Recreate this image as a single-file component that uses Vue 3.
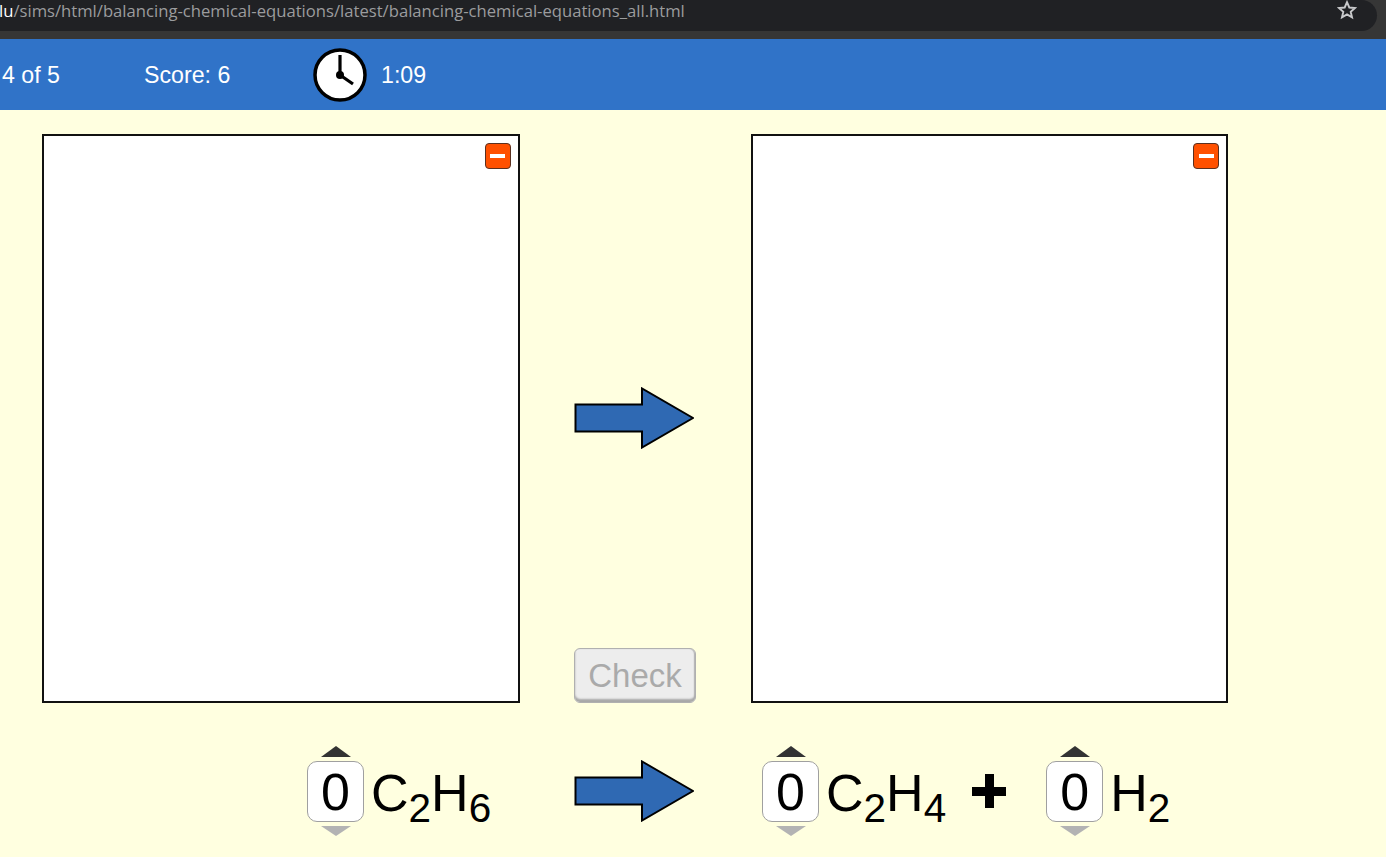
<script setup>
const reactants = [{ id: 1, parts: [["C", "2"], ["H", "6"]] }];
const products = [
  { id: 2, parts: [["C", "2"], ["H", "4"]] },
  { id: 3, parts: [["H", "2"]] },
];
</script>

<template>
  <div class="page">
    <div class="browser">
      <div class="address">
        <span class="url"><span class="host">lu</span>/sims/html/balancing-chemical-equations/latest/balancing-chemical-equations_all.html</span>
        <svg class="star" width="20" height="20" viewBox="0 0 20 20">
          <path d="M10 2.2l2.3 5.3 5.7.5-4.3 3.8 1.3 5.6-5-3-5 3 1.3-5.6L2 8l5.7-.5z" fill="none" stroke="#c8c9cb" stroke-width="1.9" stroke-linejoin="miter" />
        </svg>
      </div>
    </div>

    <header class="status">
      <span class="level">4 of 5</span>
      <span class="score">Score: 6</span>
      <svg class="clock" width="54" height="54" viewBox="0 0 54 54">
        <circle cx="27" cy="27" r="25" fill="#fff" stroke="#000" stroke-width="3.5" />
        <path d="M27 27V7M27 27l13 9" fill="none" stroke="#000" stroke-width="3.2" />
        <circle cx="27" cy="27" r="4" fill="#000" />
      </svg>
      <span class="time">1:09</span>
    </header>

    <main class="game">
      <div class="boxes">
        <section class="box">
          <button class="collapse"><i></i></button>
        </section>
        <div class="middle">
          <svg class="arrow" width="120" height="62" viewBox="0 0 120 62">
            <path d="M1.5 17.5H68V1.5L119 31 68 60.5V44.5H1.5z" fill="#2f69b3" stroke="#000" stroke-width="2" />
          </svg>
          <button class="check" disabled>Check</button>
        </div>
        <section class="box">
          <button class="collapse"><i></i></button>
        </section>
      </div>

      <div class="equation">
        <div class="side left">
          <div v-for="term in reactants" :key="term.id" class="term">
            <div class="spinner">
              <span class="up"></span>
              <span class="value">0</span>
              <span class="down"></span>
            </div>
            <span class="formula"><template v-for="p in term.parts" :key="p[0]">{{ p[0] }}<sub>{{ p[1] }}</sub></template></span>
          </div>
        </div>
        <svg class="arrow eq-arrow" width="120" height="62" viewBox="0 0 120 62">
          <path d="M1.5 17.5H68V1.5L119 31 68 60.5V44.5H1.5z" fill="#2f69b3" stroke="#000" stroke-width="2" />
        </svg>
        <div class="side right">
          <template v-for="(term, i) in products" :key="term.id">
            <span v-if="i > 0" class="plus"></span>
            <div class="term">
              <div class="spinner">
                <span class="up"></span>
                <span class="value">0</span>
                <span class="down"></span>
              </div>
              <span class="formula"><template v-for="p in term.parts" :key="p[0]">{{ p[0] }}<sub>{{ p[1] }}</sub></template></span>
            </div>
          </template>
        </div>
      </div>
    </main>
  </div>
</template>

<style>
html,
body {
  margin: 0;
  background: #ffffe0;
  overflow: hidden;
}
</style>

<style scoped>
.page {
  width: 1386px;
  height: 857px;
  background: #ffffe0;
  font-family: "Liberation Sans", Arial, sans-serif;
  color: #000;
  overflow: hidden;
}

.browser {
  height: 39px;
  box-sizing: border-box;
  padding-bottom: 8px;
  background: #363636;
}

.address {
  width: 1377px;
  height: 31px;
  box-sizing: border-box;
  background: #202124;
  border-radius: 0 16px 16px 0;
  display: flex;
  align-items: flex-start;
  justify-content: space-between;
  padding-right: 20px;
}

.url {
  font-family: "Open Sans", sans-serif;
  font-size: 16.65px;
  line-height: 21px;
  color: #9b9c9e;
  margin-left: -1px;
  white-space: nowrap;
}

.host {
  color: #fff;
}

.status {
  height: 71px;
  padding-top: 2px;
  box-sizing: border-box;
  background: #3073c8;
  color: #fff;
  font-size: 23.2px;
  display: flex;
  align-items: center;
}

.level {
  margin-left: 2px;
  width: 142px;
}

.score {
  width: 169px;
}

.clock {
  margin: -2px 14px 0 0;
}

.game {
  padding: 24px 0 0 42px;
}

.boxes {
  display: flex;
}

.box {
  width: 477.5px;
  height: 569px;
  box-sizing: border-box;
  background: #fff;
  border: 2px solid #111;
  position: relative;
}

.collapse {
  position: absolute;
  top: 7px;
  right: 7px;
  width: 26px;
  height: 26px;
  padding: 0;
  background: #ff5000;
  border: 1px solid #5a3020;
  border-radius: 4px;
  display: flex;
  align-items: center;
  justify-content: center;
}

.collapse i {
  width: 15px;
  height: 4px;
  background: #fff;
}

.middle {
  width: 231px;
  display: flex;
  flex-direction: column;
  align-items: center;
  padding: 253px 2px 0 0;
  box-sizing: border-box;
}

.middle .arrow {
  margin-bottom: 199px;
}

.arrow {
  display: block;
}

.check {
  width: 122px;
  height: 55px;
  margin-left: 2px;
  padding: 0;
  box-sizing: border-box;
  border: 1px solid #b0b0b0;
  border-radius: 6px;
  background: #ededed;
  box-shadow: inset 0 -3px 2px #a8a8a8, inset -1px 0 1px #b8b8b8;
  color: #aaa;
  font-family: inherit;
  font-size: 33px;
}

.equation {
  display: flex;
  align-items: flex-start;
  margin-top: 43px;
}

.side {
  display: flex;
  align-items: flex-start;
}

.left {
  width: 533px;
  padding-left: 265px;
  box-sizing: border-box;
}

.eq-arrow {
  margin: 14px 0 0 -1px;
}

.right {
  margin-left: 68px;
}

.term {
  display: flex;
  align-items: flex-start;
}

.spinner {
  width: 57px;
  display: flex;
  flex-direction: column;
  align-items: center;
}

.up,
.down {
  width: 0;
  height: 0;
  border-left: 15px solid transparent;
  border-right: 15px solid transparent;
}

.up {
  border-bottom: 11px solid #333;
  margin-bottom: 4px;
}

.down {
  border-top: 10px solid #b3b3b3;
  margin-top: 4px;
}

.value {
  width: 57px;
  height: 61px;
  box-sizing: border-box;
  background: #fff;
  border: 1px solid #a0a0a0;
  border-radius: 10px;
  font-size: 52px;
  line-height: 60px;
  text-align: center;
}

.formula {
  margin: 17px 0 0 7px;
  font-size: 52px;
  line-height: 60px;
  white-space: nowrap;
}

.formula sub {
  font-size: 40.5px;
  line-height: 0;
  vertical-align: -11px;
}

.plus {
  width: 34px;
  height: 34px;
  margin: 28px 40px 0 26px;
  background:
    linear-gradient(#000, #000) center / 34px 9px no-repeat,
    linear-gradient(#000, #000) center / 9px 34px no-repeat;
}
</style>
